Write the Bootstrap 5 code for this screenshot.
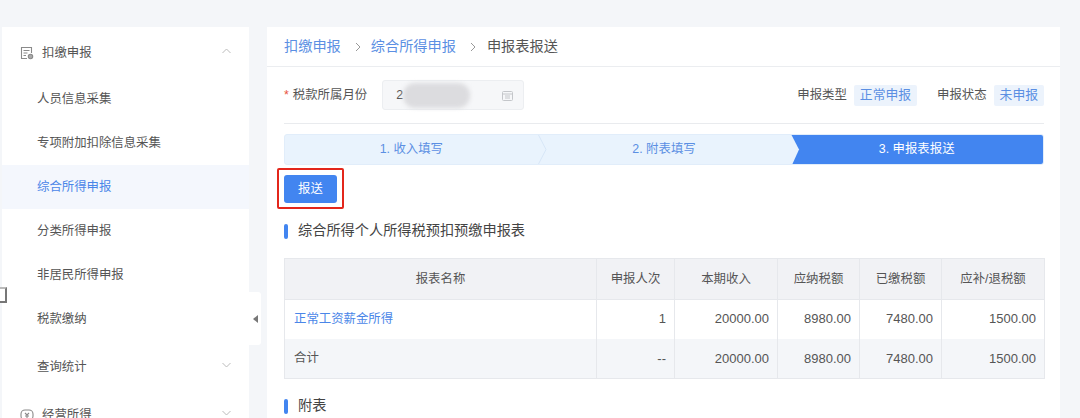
<!DOCTYPE html>
<html lang="zh">
<head>
<meta charset="utf-8">
<title>综合所得申报</title>
<link href="https://cdn.jsdelivr.net/npm/bootstrap@5.3.0/dist/css/bootstrap.min.css" rel="stylesheet">
<style>
html,body{height:418px;overflow:hidden}
body{background:#f4f6f9;font-family:"Liberation Sans","Noto Sans CJK SC",sans-serif;font-size:12.4px;color:#555;padding:27px 0 0 2px}
.shell{height:391px;overflow:hidden}
.side{width:247px;flex:none;background:#fff;height:391px;overflow:hidden;padding-top:4px}
.side-row{height:44px;padding:0 18px 0 35px;color:#555;font-size:12.4px}
.side-row.top{padding-left:18px;padding-bottom:2px;height:46px}
.side-row.now{background:#f4f7fd;color:#4a86e8}
.side-ic{width:14px;height:14px;margin-right:8px;flex:none}
.gutter{width:18px;flex:none;position:relative}
.fold{position:absolute;left:0;top:265px;width:12px;height:53px;background:#fff;border-radius:0 3px 3px 0;color:#777}
.pane{width:793px;flex:none;background:#fff;height:391px;overflow:hidden}
.crumbs{height:40px;padding-left:17px;border-bottom:1px solid #ebedf0;font-size:14.2px;color:#555}
.crumbs a{color:#5b8fe3;text-decoration:none}
.crumbs svg{margin:0 10px 0 14px}
.crumbs svg.next{margin:0 11px 0 14px}
.body-wrap{padding:0 17px}
.filter{height:57px;border-bottom:1px solid #e9ebee;margin-right:-1px}
.star{color:#e8553f;margin-right:4px}
.datebox{width:142px;height:30px;margin-left:15px;background:#f6f7f9;border:1px solid #eceef1;border-radius:3px;padding:0 10px 0 13px;position:relative}
.smudge{position:absolute;left:20px;top:2px;width:67px;height:25px;background:#dcdcdf;border-radius:12px;filter:blur(2px)}
.tag-soft{background:#ecf3fc;color:#5b8fe3;height:21px;padding:0 6px;border-radius:2px;margin-left:7px;font-size:12.800px}
.tag-lab{margin-left:20px}
.stepbar{height:31px;margin-top:10px;margin-right:-1px;background:#e9f3fd;border:1px solid #e1edfa;border-radius:3px;overflow:hidden;color:#5b8fe3;position:relative}
.stepcell{flex:1 1 0;height:100%}
.stepcell.on{color:#fff}
.stepfill{position:absolute;left:505px;right:0;top:-1px;height:31px;background:#4285f0}
.stepcell span{position:relative}
.stepsvg{position:absolute;top:-1px;height:31px;width:12px}
.btn-wrap{margin-top:3px;display:inline-block;border:2px solid #e3261b;border-radius:2px;padding:5px 0 0 5px;width:67px;height:41px;margin-left:-7px}
.send{background:#4285f0;color:#fff;width:53px;height:28px;padding:0;font-size:12.4px;border:0;border-radius:3px;display:block}
.send:hover{background:#4285f0;color:#fff}
.sec-title{font-size:14.2px;color:#444;height:20px;margin-top:12px}
.sec-title::before{content:"";display:block;width:4px;height:15px;background:#4285f0;border-radius:2px;margin-right:10px}
.report{width:760px;margin:17px 0 0;table-layout:fixed;border-collapse:collapse;color:#555;font-size:12.4px}
.report th,.report td{border:1px solid #e6e8ec;padding:0 8px;vertical-align:middle;font-weight:400;box-shadow:none}
.report th{background:#f1f2f5;height:41px;text-align:center;color:#555}
.report td{height:39px;background:#fff;font-size:13px;color:#555}
.report tr.sum td{background:#f4f6f9;height:40px}
.report td.cn{font-size:12.4px;padding-left:9px}
.report a{color:#4a86e8;text-decoration:none}
.report tr:nth-child(1) td{border-bottom-color:transparent}
.report td:not(.cn){text-align:right}
.report tbody td{border-top:0}
.stray{position:absolute;left:-3px;top:287px;width:10px;height:16px;background:#fff;border:2px solid #777;border-left:0;border-top-color:#bbb}
.chev{margin-bottom:4px;flex:none}
</style>
</head>
<body>
<div class="stray"></div>
<div class="d-flex shell">
  <aside class="side">
    <div class="side-row top d-flex align-items-center">
      <svg class="side-ic" viewBox="0 0 14 14" fill="none" stroke="#8a8a8a" stroke-width="1.1"><path d="M11.500 7V1.500h-10v11H7"/><path d="M3.500 4.500h6M3.500 7h4M3.500 9.500h2.500"/><circle cx="10.500" cy="10.500" r="2.200" fill="#aaa"/></svg>
      <span class="flex-grow-1">扣缴申报</span>
      <svg class="chev" width="9" height="6" viewBox="0 0 9 6" fill="none" stroke="#bbb"><path d="M.5 5l4-4 4 4"/></svg>
    </div>
    <div class="side-row d-flex align-items-center">人员信息采集</div>
    <div class="side-row d-flex align-items-center">专项附加扣除信息采集</div>
    <div class="side-row now d-flex align-items-center">综合所得申报</div>
    <div class="side-row d-flex align-items-center">分类所得申报</div>
    <div class="side-row d-flex align-items-center">非居民所得申报</div>
    <div class="side-row d-flex align-items-center">税款缴纳</div>
    <div class="side-row d-flex align-items-center mt-1 justify-content-between"><span>查询统计</span>
      <svg class="chev" width="9" height="6" viewBox="0 0 9 6" fill="none" stroke="#bbb"><path d="M.5 1l4 4 4-4"/></svg></div>
    <div class="side-row top d-flex align-items-center mt-1">
      <svg class="side-ic" viewBox="0 0 14 14" fill="none" stroke="#8a8a8a" stroke-width="1.1"><rect x="1" y="2" width="12" height="10" rx="4"/><path d="M5 5l2 2 2-2M7 7v3M5 8h4"/></svg>
      <span class="flex-grow-1">经营所得</span>
      <svg class="chev" width="9" height="6" viewBox="0 0 9 6" fill="none" stroke="#bbb"><path d="M.5 1l4 4 4-4"/></svg>
    </div>
  </aside>
  <div class="gutter">
    <div class="fold d-flex align-items-center justify-content-center">
      <svg width="5" height="8" viewBox="0 0 5 8"><path d="M5 0v8L0 4z" fill="#777"/></svg>
    </div>
  </div>
  <main class="pane">
    <div class="crumbs d-flex align-items-center">
      <a href="#">扣缴申报</a>
      <svg width="6" height="10" viewBox="0 0 6 10" fill="none" stroke="#999"><path d="M1 1l4 4-4 4"/></svg>
      <a href="#">综合所得申报</a>
      <svg class="next" width="6" height="10" viewBox="0 0 6 10" fill="none" stroke="#999"><path d="M1 1l4 4-4 4"/></svg>
      <span>申报表报送</span>
    </div>
    <div class="body-wrap">
      <div class="filter d-flex align-items-center">
        <span><span class="star">*</span>税款所属月份</span>
        <div class="datebox d-flex align-items-center justify-content-between">
          <span>2</span><span class="smudge"></span>
          <svg width="11" height="11" viewBox="0 0 11 11" fill="none" stroke="#c4c6ca"><rect x=".5" y="1.500" width="10" height="9" rx="1"/><path d="M.5 4h10M3 6h5M3 8h5"/></svg>
        </div>
        <div class="ms-auto d-flex align-items-center">
          <span>申报类型</span><span class="tag-soft d-flex align-items-center">正常申报</span>
          <span class="tag-lab">申报状态</span><span class="tag-soft d-flex align-items-center">未申报</span>
        </div>
      </div>
      <div class="stepbar d-flex">
        <div class="stepfill"></div>
        <svg class="stepsvg" style="left:253px" viewBox="0 0 12 31" fill="none" stroke="#d7e6f7"><path d="M0 0l8 15.500L0 31"/></svg>
        <svg class="stepsvg" style="left:505px" viewBox="0 0 12 31"><path d="M0 0h1l8 15.500L2 31H0z" fill="#e9f3fd"/></svg>
        <div class="stepcell d-flex align-items-center justify-content-center"><span>1. 收入填写</span></div>
        <div class="stepcell d-flex align-items-center justify-content-center"><span>2. 附表填写</span></div>
        <div class="stepcell on d-flex align-items-center justify-content-center"><span>3. 申报表报送</span></div>
      </div>
      <div class="btn-wrap"><button class="btn send" type="button">报送</button></div>
      <div class="sec-title d-flex align-items-center">综合所得个人所得税预扣预缴申报表</div>
      <table class="report">
        <colgroup><col style="width:312px"><col style="width:78px"><col style="width:103px"><col style="width:82px"><col style="width:82px"><col style="width:103px"></colgroup>
        <thead><tr><th>报表名称</th><th>申报人次</th><th>本期收入</th><th>应纳税额</th><th>已缴税额</th><th>应补/退税额</th></tr></thead>
        <tbody>
          <tr><td class="cn"><a href="#">正常工资薪金所得</a></td><td>1</td><td>20000.00</td><td>8980.00</td><td>7480.00</td><td>1500.00</td></tr>
          <tr class="sum"><td class="cn">合计</td><td>--</td><td>20000.00</td><td>8980.00</td><td>7480.00</td><td>1500.00</td></tr>
        </tbody>
      </table>
      <div class="sec-title d-flex align-items-center" style="margin-top:17px">附表</div>
    </div>
  </main>
</div>
</body>
</html>
